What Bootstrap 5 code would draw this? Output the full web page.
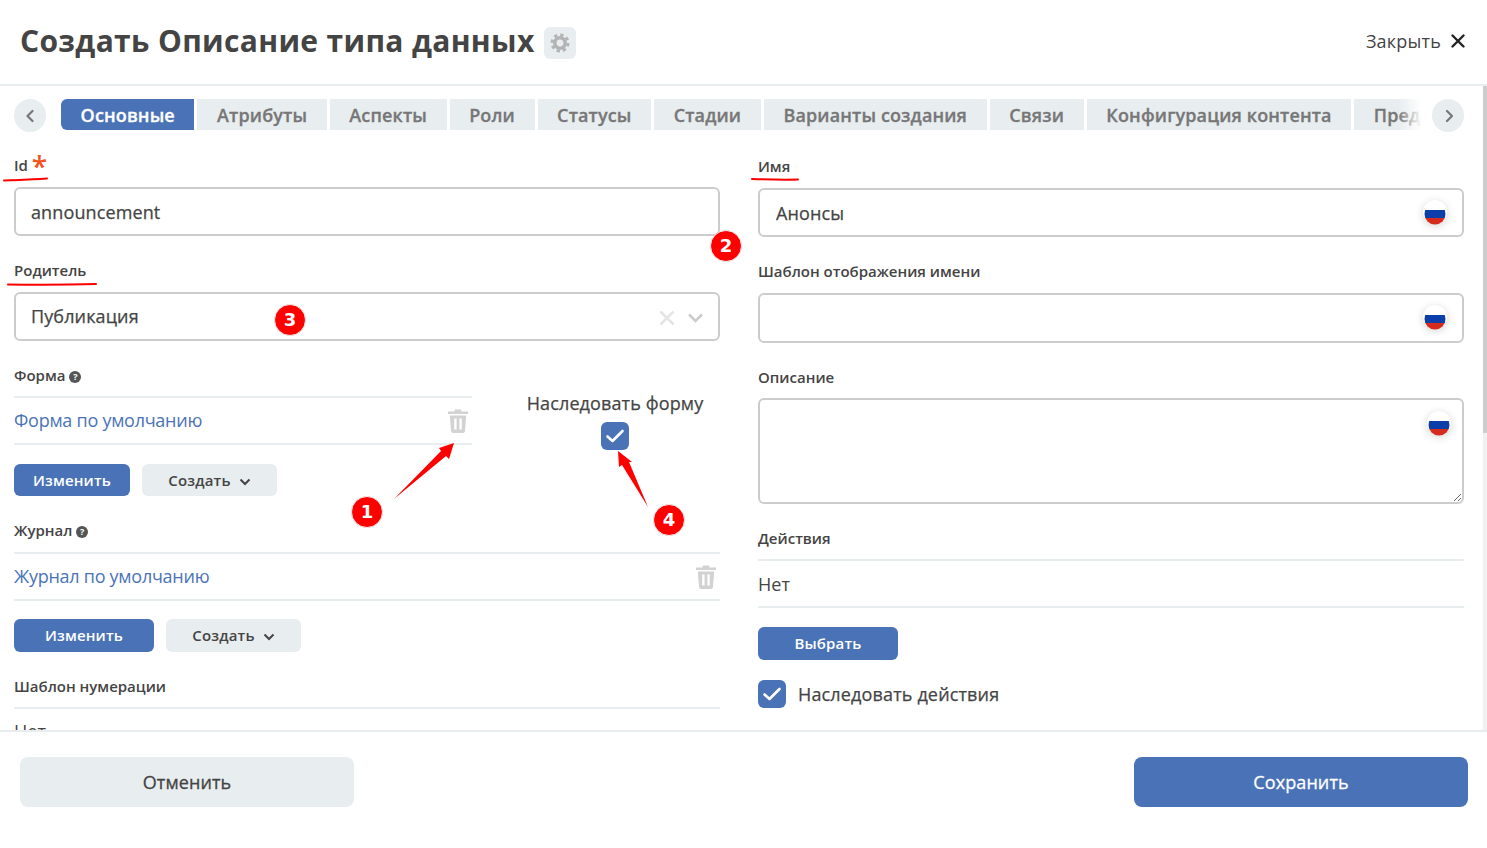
<!DOCTYPE html>
<html lang="ru">
<head>
  <meta charset="UTF-8">
  <meta name="viewport" content="width=device-width, initial-scale=1.0">
  <title>Создать Описание типа данных</title>
  <link href="https://cdn.jsdelivr.net/npm/bootstrap@5.3.0/dist/css/bootstrap.min.css" rel="stylesheet">
  <style>
    html, body { height: 100%; overflow: hidden; }
    body { font-family: "Open Sans", "Noto Sans", sans-serif; color: #444; background: #fff; }
    .page-wrap { height: 848px; position: relative; }

    .modal-head { height: 86px; border-bottom: 2px solid #e8edf0; padding: 0 22px 2px 20px; }
    .modal-title-text { font-size: 30px; font-weight: 700; line-height: 1; letter-spacing: .34px; color: #444; }
    .gear-btn { width: 32px; height: 32px; background: #e8edf0; border-radius: 6px; margin: 4px 0 0 9px; }
    .close-text { font-size: 18px; letter-spacing: .2px; color: #444; margin-right: 10px; }

    .modal-main { height: 644px; overflow: hidden; }
    .main-scroll { padding: 13px 19px 0 14px; overflow: hidden; }
    .track { width: 4px; background: #f1f1f1; }
    .thumb { height: 347px; background: #ccc; }

    .tab-arrow { width: 32px; height: 33px; border-radius: 50%; background: #e8edf0; flex: none; }
    .tabs-clip { overflow: hidden; margin: 0 10px 0 15px; position: relative; height: 31px; gap: 3px; }
    .tabs-clip::after { content: ""; position: absolute; right: 0; top: 0; bottom: 0; width: 24px; background: linear-gradient(to right, rgba(255,255,255,0), #fff); }
    .tab-item { flex: none; height: 31px; line-height: 32px; padding: 0 19.6px; font-size: 18px; font-weight: 600; letter-spacing: .14px; -webkit-text-stroke: .3px; color: #777; background: #e8edf0; white-space: nowrap; }
    .tab-item.active-tab { background: #4a73b7; color: #fff; border-radius: 6px 0 0 6px; }

    .form-cols { display: grid; grid-template-columns: 706px 706px; column-gap: 38px; margin-top: 24px; }
    .right-col { padding-top: 1px; }
    .right-col .fld-input.form-control { padding-left: 16px; }
    .fld-label { font-size: 15px; font-weight: 600; line-height: 19px; color: #444; margin-bottom: 12px; display: block; }
    .fld-label.area-label { margin-bottom: 11px; }
    .req-star { color: #f4511e; font-size: 28px; line-height: 14px; font-weight: 600; vertical-align: -6px; }
    .fld-input.form-control { height: 49px; border: 2px solid #ccc; border-radius: 6px; font-size: 18px; letter-spacing: .12px; -webkit-text-stroke: .25px; color: #444; padding: 0 15px; box-shadow: none; background-color: #fff; }
    .fld-input.tall { height: 50px; }
    textarea.fld-input.form-control { height: 106px; }
    .gap-after { margin-bottom: 25px; }
    .flag-wrap { position: relative; }
    .flag-dot { position: absolute; right: 17px; top: 12px; width: 24px; height: 24px; border-radius: 50%; box-shadow: 0 2px 8px rgba(0,0,0,.18); background: #fff; }
    .flag-dot.in-area { right: 13px; top: 13px; }
    .clear-icons { margin-top: 2px; }

    .lined-row { border-top: 2px solid #e8edf0; border-bottom: 2px solid #e8edf0; height: 49px; font-size: 18px; }
    .lined-row.row-drop { padding-top: 2px; }
    .lined-row a { color: #4a73b7; text-decoration: none; letter-spacing: -.26px; }
    .lined-label { margin-bottom: 11px; }
    .lined-label.wide-gap { margin-bottom: 12px; }
    .help-dot { display: inline-block; width: 12px; height: 12px; line-height: 12px; border-radius: 50%; background: #555; color: #fff; font-size: 9px; font-weight: 700; text-align: center; vertical-align: 1px; }

    .act-btn.btn { height: 32px; padding: 0; font-size: 15px; font-weight: 600; letter-spacing: .15px; border: 0; border-radius: 6px; }
    .blue-btn.btn { background: #4a73b7; color: #fff; }
    .grey-btn.btn { background: #e8edf0; color: #444; }
    .w-116 { width: 116px; }
    .w-135 { width: 135px; }
    .w-140 { width: 140px; }
    .btn-pair { margin-top: 19px; margin-bottom: 25px; }
    .btn-pair.last-pair { margin-top: 18px; }
    .last-pair .act-btn.btn { height: 33px; }
    .btn-select.btn { height: 33px; margin-top: 19px; }

    .form-side { width: 458px; flex: none; }
    .inherit-box { font-size: 18px; letter-spacing: .12px; -webkit-text-stroke: .25px; color: #444; padding: 25px 0 0 38px; line-height: 24px; gap: 7px; }
    .check-big.form-check-input { width: 28px; height: 28px; margin: 0; border: 0; border-radius: 6px; background-color: #4a73b7; background-size: 20px; float: none; box-shadow: none;
      background-image: url("data:image/svg+xml,%3csvg xmlns='http://www.w3.org/2000/svg' viewBox='0 0 20 20'%3e%3cpath fill='none' stroke='%23fff' stroke-width='2.6' stroke-linecap='round' stroke-linejoin='round' d='M2.500 10.500l5 4.500L17.500 5'/%3e%3c/svg%3e"); }
    .inherit-line { font-size: 18px; letter-spacing: .15px; -webkit-text-stroke: .25px; margin-top: 20px; color: #444; }

    .modal-foot { height: 118px; border-top: 2px solid #e8edf0; padding: 25px 19px 0 20px; }
    .foot-btn.btn { width: 334px; height: 50px; border: 0; border-radius: 8px; font-size: 18px; letter-spacing: .1px; -webkit-text-stroke: .3px; }

    .annot-layer { position: absolute; left: 0; top: 0; width: 1487px; height: 848px; pointer-events: none; }
    .annot-num { position: absolute; width: 32px; height: 32px; border-radius: 50%; background: #f00; border: 1px solid #eee; color: #fff; font-family: "DejaVu Sans", sans-serif; font-size: 18px; font-weight: 700; line-height: 30px; text-align: center; }
    .n1 { left: 351px; top: 496px; }
    .n2 { left: 710px; top: 230px; }
    .n3 { left: 274px; top: 304px; }
    .n4 { left: 653px; top: 504px; }
  </style>
</head>
<body>

<div class="page-wrap d-flex flex-column">

  <!-- Header -->
  <div class="modal-head d-flex align-items-center justify-content-between">
    <div class="d-flex align-items-center">
      <span class="modal-title-text">Создать Описание типа данных</span>
      <span class="gear-btn d-flex align-items-center justify-content-center">
        <svg width="20" height="20" viewBox="0 0 20 20"><circle cx="10" cy="10" r="5.2" fill="none" stroke="#b4b4b4" stroke-width="3.6"/><circle cx="10" cy="10" r="8" fill="none" stroke="#b4b4b4" stroke-width="3" stroke-dasharray="3.3 2.98"/></svg>
      </span>
    </div>
    <div class="d-flex align-items-center">
      <span class="close-text">Закрыть</span>
      <svg width="14" height="14" viewBox="0 0 14 14"><path d="M1.500 1.500l11 11M12.500 1.500l-11 11" stroke="#222" stroke-width="2.4" stroke-linecap="round"/></svg>
    </div>
  </div>

  <!-- Body -->
  <div class="modal-main d-flex">
    <div class="main-scroll flex-grow-1">

      <div class="d-flex align-items-start">
        <span class="tab-arrow d-flex align-items-center justify-content-center">
          <svg width="10" height="14" viewBox="0 0 10 14"><path d="M7.500 2L2.500 7l5 5" fill="none" stroke="#777" stroke-width="2.2" stroke-linecap="round" stroke-linejoin="round"/></svg>
        </span>
        <div class="tabs-clip d-flex flex-grow-1" id="tabs"></div>
        <span class="tab-arrow d-flex align-items-center justify-content-center">
          <svg width="10" height="14" viewBox="0 0 10 14"><path d="M4 2l5 5-5 5" fill="none" stroke="#777" stroke-width="2.2" stroke-linecap="round" stroke-linejoin="round"/></svg>
        </span>
      </div>

      <div class="form-cols">
        <!-- Left column -->
        <div>
          <label class="fld-label">Id <span class="req-star">*</span></label>
          <input class="form-control fld-input gap-after" value="announcement">

          <label class="fld-label">Родитель</label>
          <div class="form-control fld-input gap-after d-flex align-items-center justify-content-between">
            <span>Публикация</span>
            <svg class="clear-icons" width="44" height="14" viewBox="0 0 44 14"><path d="M1.500 0.500l13 13M14.500 0.500l-13 13" stroke="#e4e4e4" stroke-width="2.6"/><path d="M30 3.500l6.500 6.500 6.500-6.500" fill="none" stroke="#ccc" stroke-width="2.6"/></svg>
          </div>

          <div class="d-flex">
            <div class="form-side">
              <label class="fld-label lined-label">Форма <span class="help-dot">?</span></label>
              <div class="lined-row d-flex align-items-center justify-content-between">
                <a href="#">Форма по умолчанию</a>
                <svg class="me-1" width="20" height="26" viewBox="0 0 20 26"><use href="#trash"/></svg>
              </div>
              <div class="d-flex gap-2 btn-pair">
                <button class="btn act-btn blue-btn w-116">Изменить</button>
                <button class="btn act-btn grey-btn w-135 ms-1">Создать
                  <svg class="ms-1" width="12" height="8" viewBox="0 0 12 8"><path d="M1.500 1.500L6 6l4.500-4.500" fill="none" stroke="#444" stroke-width="2"/></svg>
                </button>
              </div>
            </div>
            <div class="inherit-box flex-grow-1 d-flex flex-column align-items-center">
              <span>Наследовать форму</span>
              <input class="form-check-input check-big" type="checkbox" checked>
            </div>
          </div>

          <label class="fld-label lined-label wide-gap">Журнал <span class="help-dot">?</span></label>
          <div class="lined-row d-flex align-items-center justify-content-between">
            <a href="#">Журнал по умолчанию</a>
            <svg class="me-1" width="20" height="26" viewBox="0 0 20 26"><use href="#trash"/></svg>
          </div>
          <div class="d-flex gap-2 btn-pair last-pair">
            <button class="btn act-btn blue-btn w-140">Изменить</button>
            <button class="btn act-btn grey-btn w-135 ms-1">Создать
              <svg class="ms-1" width="12" height="8" viewBox="0 0 12 8"><path d="M1.500 1.500L6 6l4.500-4.500" fill="none" stroke="#444" stroke-width="2"/></svg>
            </button>
          </div>

          <label class="fld-label lined-label">Шаблон нумерации</label>
          <div class="lined-row d-flex align-items-center">Нет</div>
        </div>

        <!-- Right column -->
        <div class="right-col">
          <label class="fld-label">Имя</label>
          <div class="flag-wrap gap-after">
            <input class="form-control fld-input" value="Анонсы">
            <span class="flag-dot"><svg width="24" height="24" viewBox="0 0 24 24"><use href="#flag"/></svg></span>
          </div>

          <label class="fld-label">Шаблон отображения имени</label>
          <div class="flag-wrap gap-after">
            <input class="form-control fld-input tall">
            <span class="flag-dot"><svg width="24" height="24" viewBox="0 0 24 24"><use href="#flag"/></svg></span>
          </div>

          <label class="fld-label area-label">Описание</label>
          <div class="flag-wrap gap-after">
            <textarea class="form-control fld-input"></textarea>
            <span class="flag-dot in-area"><svg width="24" height="24" viewBox="0 0 24 24"><use href="#flag"/></svg></span>
          </div>

          <label class="fld-label lined-label">Действия</label>
          <div class="lined-row row-drop d-flex align-items-center">Нет</div>
          <button class="btn act-btn blue-btn w-140 d-block btn-select">Выбрать</button>
          <div class="inherit-line d-flex align-items-center gap-2">
            <input class="form-check-input check-big me-1" type="checkbox" checked>
            <span>Наследовать действия</span>
          </div>
        </div>
      </div>
    </div>
    <div class="track"><div class="thumb"></div></div>
  </div>

  <!-- Footer -->
  <div class="modal-foot d-flex justify-content-between align-items-start">
    <button class="btn foot-btn grey-btn">Отменить</button>
    <button class="btn foot-btn blue-btn">Сохранить</button>
  </div>

  <!-- Red annotations drawn over the screenshot -->
  <div class="annot-layer">
    <svg width="1487" height="848" viewBox="0 0 1487 848">
      <path d="M4 180.500C18 180 32 179.500 47 178.500" fill="none" stroke="#f00" stroke-width="2" stroke-linecap="round"/>
      <path d="M8 284.500C35 285 65 285 96 284" fill="none" stroke="#f00" stroke-width="2" stroke-linecap="round"/>
      <path d="M752 179C767 179.500 782 180 798 179.500" fill="none" stroke="#f00" stroke-width="2" stroke-linecap="round"/>
      <polygon points="394,499 441,451 439,448 454,443 449,459 446,456" fill="#f00"/>
      <polygon points="648,507 622,465 619,467 618,451 632,462 629,462" fill="#f00"/>
    </svg>
    <span class="annot-num n1">1</span>
    <span class="annot-num n2">2</span>
    <span class="annot-num n3">3</span>
    <span class="annot-num n4">4</span>
  </div>
</div>

<!-- shared icons -->
<svg width="0" height="0" class="position-absolute">
  <defs>
    <g id="trash">
      <path d="M7 1.500h6l.6 2H20v2.500H0V3.500h6.400z" fill="#d2d2d2"/>
      <path d="M1.800 7.500h16.400l-1.200 15.500q-.2 2-2.200 2H5.200q-2 0-2.200-2zM6.200 10.500v11h2.400v-11zM11.400 10.500v11h2.400v-11z" fill="#d2d2d2" fill-rule="evenodd"/>
    </g>
    <g id="flag">
      <clipPath id="flagClip"><circle cx="12" cy="12" r="10.500"/></clipPath>
      <g clip-path="url(#flagClip)">
        <rect width="24" height="8" fill="#fff"/>
        <rect y="8" width="24" height="8" fill="#0b3ea8"/>
        <rect y="16" width="24" height="8" fill="#d52b1e"/>
      </g>
    </g>
  </defs>
</svg>

<script src="https://cdn.jsdelivr.net/npm/bootstrap@5.3.0/dist/js/bootstrap.bundle.min.js"></script>
<script>
  // tabs come from a plain list
  let tabNames = ["Основные", "Атрибуты", "Аспекты", "Роли", "Статусы", "Стадии", "Варианты создания", "Связи", "Конфигурация контента", "Представления"];
  let tabsBox = document.getElementById("tabs");
  tabNames.forEach((name, index) => {
    let tab = document.createElement("div");
    tab.className = index === 0 ? "tab-item active-tab" : "tab-item";
    tab.textContent = name;
    tabsBox.appendChild(tab);
  });
</script>
</body>
</html>
